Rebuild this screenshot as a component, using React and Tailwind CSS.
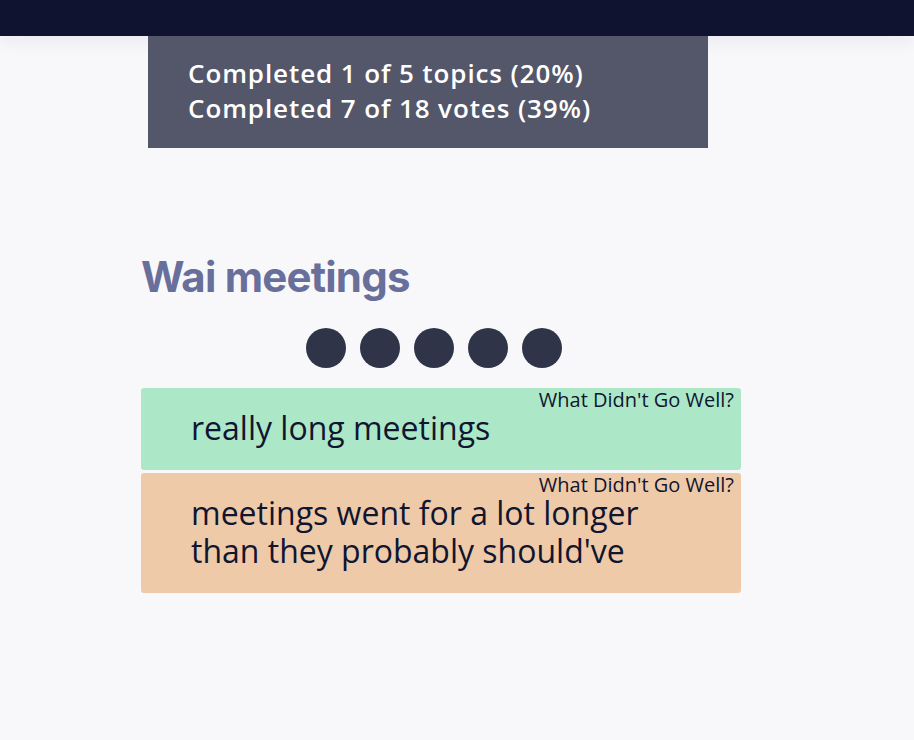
const cards = [
    {
        id: 1,
        label: "What Didn't Go Well?",
        text: "really long meetings",
        color: "bg-[#ace8c8]",
    },
    {
        id: 2,
        label: "What Didn't Go Well?",
        text: "meetings went for a lot longer than they probably should've",
        color: "bg-[#efcaa8]",
    },
];

const App = () => {
    return (
        <div className="min-h-screen bg-[#f8f8fb] font-['Inter',sans-serif]">
            {/* Top bar */}
            <div className="h-[36px] bg-[#0f1330] shadow-[0_6px_18px_rgba(20,20,60,0.06)]"></div>

            <div className="w-[600px] ml-[141px]">
                {/* Progress box */}
                <div className="relative z-10 ml-[7px] w-[560px] bg-[#545669] pl-[40px] pt-[20px] pb-[22px] text-white text-[26px] leading-[35px] tracking-[0.9px] font-semibold font-['Open_Sans',sans-serif]">
                    <p>Completed 1 of 5 topics (20%)</p>
                    <p>Completed 7 of 18 votes (39%)</p>
                </div>

                <h2 className="mt-[105px] text-[42px] leading-[48px] font-bold text-[#686f9b] tracking-[-0.8px]">
                    Wai meetings
                </h2>

                <div className="mt-[27px] flex justify-center">
                    {[1, 2, 3, 4, 5].map((n) => (
                        <span
                            key={n}
                            className="w-[40px] h-[40px] mr-[14px] rounded-full bg-[#303449]"
                        ></span>
                    ))}
                </div>

                <div className="mt-[20px] flex flex-col gap-[3px] font-['Open_Sans',sans-serif] text-[#101530]">
                    {cards.map((card) => (
                        <div
                            key={card.id}
                            className={`relative rounded-[3px] ${card.color} pt-[21px] pb-[23px] pl-[50px] pr-[90px]`}
                        >
                            <span className="absolute top-[4px] right-[7px] text-[20px] leading-[16px]">
                                {card.label}
                            </span>
                            <p className="text-[32px] leading-[38px]">{card.text}</p>
                        </div>
                    ))}
                </div>
            </div>
        </div>
    );
};

export default App;
